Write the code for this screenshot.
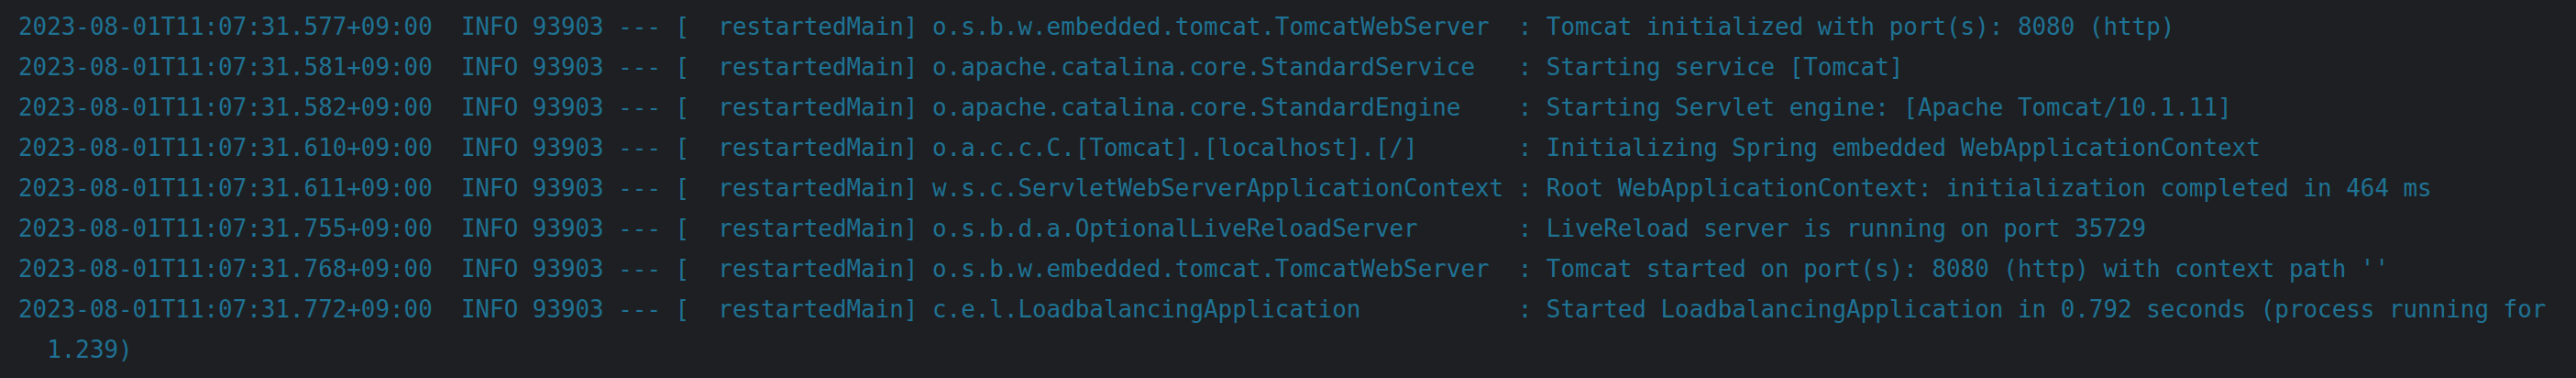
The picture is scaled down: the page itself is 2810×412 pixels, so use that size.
import React from 'react';

interface LogEntry {
  time: string;
  logger: string;
  message: string;
}

const LOGS: LogEntry[] = [
  { time: '577', logger: 'o.s.b.w.embedded.tomcat.TomcatWebServer', message: 'Tomcat initialized with port(s): 8080 (http)' },
  { time: '581', logger: 'o.apache.catalina.core.StandardService', message: 'Starting service [Tomcat]' },
  { time: '582', logger: 'o.apache.catalina.core.StandardEngine', message: 'Starting Servlet engine: [Apache Tomcat/10.1.11]' },
  { time: '610', logger: 'o.a.c.c.C.[Tomcat].[localhost].[/]', message: 'Initializing Spring embedded WebApplicationContext' },
  { time: '611', logger: 'w.s.c.ServletWebServerApplicationContext', message: 'Root WebApplicationContext: initialization completed in 464 ms' },
  { time: '755', logger: 'o.s.b.d.a.OptionalLiveReloadServer', message: 'LiveReload server is running on port 35729' },
  { time: '768', logger: 'o.s.b.w.embedded.tomcat.TomcatWebServer', message: "Tomcat started on port(s): 8080 (http) with context path ''" },
  { time: '772', logger: 'c.e.l.LoadbalancingApplication', message: 'Started LoadbalancingApplication in 0.792 seconds (process running for' },
];

const formatLine = (entry: LogEntry) =>
  `2023-08-01T11:07:31.${entry.time}+09:00  INFO 93903 --- [  restartedMain] ${entry.logger.padEnd(40, ' ')} : ${entry.message}`;

const App: React.FC = () => {
  return (
    <div className="w-full h-screen bg-[#1e1f22] overflow-hidden">
      <div className="pt-[7px] pl-[20px] text-[#1f7293] text-[25.88px] leading-[44px] font-['DejaVu_Sans_Mono',monospace] whitespace-pre">
        {LOGS.map((entry) => (
          <div key={entry.time}>{formatLine(entry)}</div>
        ))}
        <div>{'  1.239)'}</div>
      </div>
    </div>
  );
};

export default App;
